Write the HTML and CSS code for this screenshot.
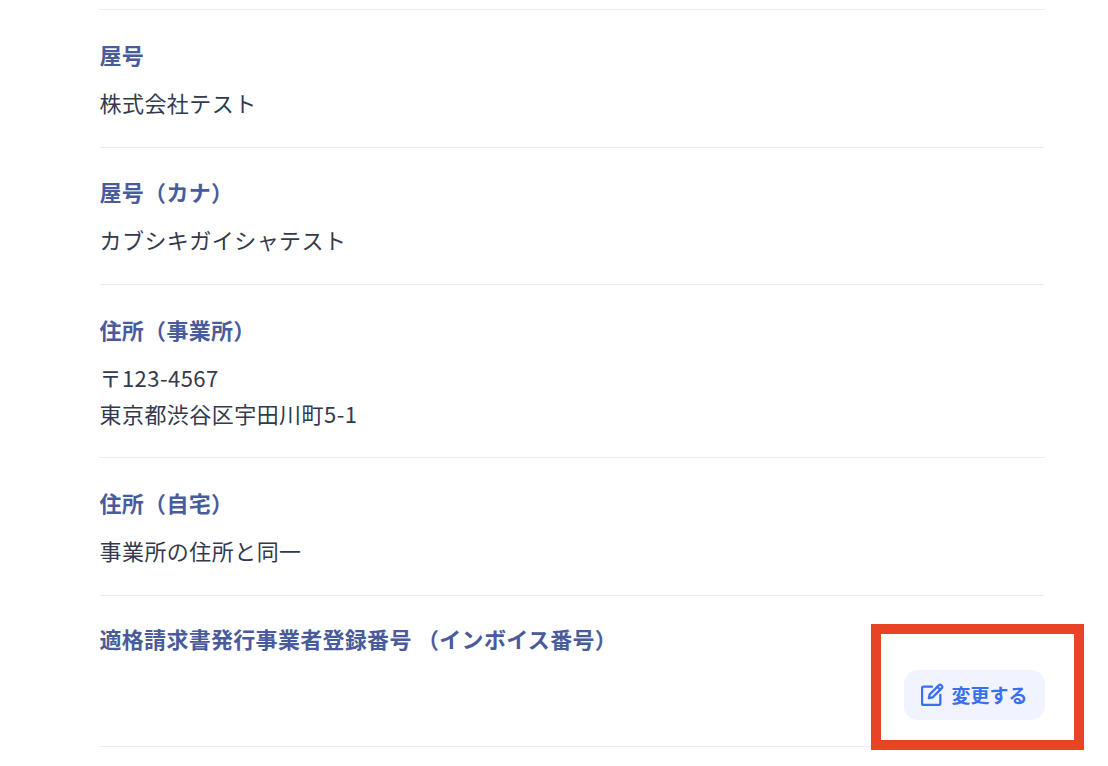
FILE: index.html
```html
<!DOCTYPE html>
<html lang="ja">
  <head>
    <meta charset="UTF-8" />
    <title>事業者情報</title>
    <link rel="stylesheet" href="styles.css">
  </head>
  <body>
    <div class="info-list">
      <!-- 屋号 -->
      <div class="info-row">
        <div class="info-label">屋号</div>
        <div class="info-value">株式会社テスト</div>
      </div>

      <div class="info-row">
        <div class="info-label">屋号（カナ）</div>
        <div class="info-value">カブシキガイシャテスト</div>
      </div>

      <!-- 住所 -->
      <div class="info-row address-row">
        <div class="info-label">住所（事業所）</div>
        <div class="info-value">〒123-4567<br>東京都渋谷区宇田川町5-1</div>
      </div>

      <div class="info-row">
        <div class="info-label">住所（自宅）</div>
        <div class="info-value">事業所の住所と同一</div>
      </div>

      <!-- インボイス番号 -->
      <div class="info-row invoice-row">
        <div class="info-label">適格請求書発行事業者登録番号 （インボイス番号）</div>
        <button class="edit-button">
          <svg class="edit-icon" viewBox="0 0 22 22" fill="none" stroke="currentColor" stroke-width="2.2" stroke-linecap="round" stroke-linejoin="round">
            <path d="M10.5 3.5H2.4A1.4 1.4 0 0 0 1 4.9v14.7A1.4 1.4 0 0 0 2.4 21h14.7a1.4 1.4 0 0 0 1.4-1.4v-8.1" />
            <path d="M7.5 14.5l.8-3.6 8.8-8.8a1.6 1.6 0 0 1 2.3 0l.5.5a1.6 1.6 0 0 1 0 2.3l-8.8 8.8z" />
            <path d="M15.6 3.6l2.8 2.8" />
          </svg>
          <span>変更する</span>
        </button>
      </div>
    </div>

    <!-- Highlight -->
    <div class="highlight-box"></div>
  </body>
</html>
```

FILE: styles.css
```css
* {
  margin: 0;
  padding: 0;
  box-sizing: border-box;
}

body {
  font-family: "Noto Sans CJK JP", "Noto Sans", sans-serif;
  background: white;
  height: 766px;
  overflow: hidden;
  position: relative;
}

.info-list {
  margin: 9px 63px 0 99px;
  border-top: 1px solid #e8edf6;
}

.info-row {
  padding: 25.5px 0 27.1px 0.5px;
  border-bottom: 1px solid #e8edf6;
}

.info-label {
  font-size: 22px;
  line-height: 36px;
  font-weight: 700;
  letter-spacing: 0.3px;
  color: #4a5b9c;
  margin-bottom: 12px;
}

.info-value {
  font-size: 22px;
  line-height: 36px;
  letter-spacing: 0.45px;
  color: #333a4d;
}

.address-row {
  padding-bottom: 26.7px;
}

/* Invoice row */
.invoice-row {
  height: 151px;
  padding-top: 24px;
  padding-bottom: 26px;
  display: flex;
  flex-direction: column;
}

.edit-button {
  align-self: flex-end;
  margin-top: auto;
  width: 141px;
  height: 50px;
  border: none;
  border-radius: 14px;
  background: #f1f4fe;
  color: #3a6ff2;
  font-family: inherit;
  font-size: 19px;
  font-weight: 700;
  display: flex;
  align-items: center;
  justify-content: center;
  gap: 7px;
}

.edit-icon {
  width: 23px;
  height: 23px;
}

.highlight-box {
  position: absolute;
  left: 871px;
  top: 624px;
  width: 213px;
  height: 126px;
  border: 10px solid #e94326;
}
```
